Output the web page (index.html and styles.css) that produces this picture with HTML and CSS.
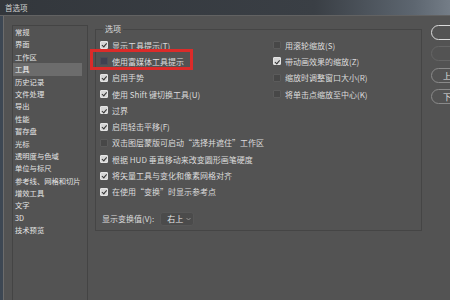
FILE: index.html
```html
<!DOCTYPE html>
<html>
<head>
    <title>首选项</title>
    <link rel="stylesheet" href="styles.css">
</head>
<body>
    <div class="window">
        <div class="titlebar">首选项</div>
        <div class="frame">
            <ul class="nav">
                <li>常规</li>
                <li>界面</li>
                <li>工作区</li>
                <li class="active">工具</li>
                <li>历史记录</li>
                <li>文件处理</li>
                <li>导出</li>
                <li>性能</li>
                <li>暂存盘</li>
                <li>光标</li>
                <li>透明度与色域</li>
                <li>单位与标尺</li>
                <li>参考线、网格和切片</li>
                <li>增效工具</li>
                <li>文字</li>
                <li>3D</li>
                <li>技术预览</li>
            </ul>

            <fieldset class="options">
                <legend>选项</legend>
                <div class="columns">
                    <div class="col">
                        <div class="check on"><span class="box"></span>显示工具提示(T)</div>
                        <div class="check focus"><span class="box"></span>使用富媒体工具提示<span class="mark"></span></div>
                        <div class="check on"><span class="box"></span>启用手势</div>
                        <div class="check on"><span class="box"></span>使用 Shift 键切换工具(U)</div>
                        <div class="check on"><span class="box"></span>过界</div>
                        <div class="check on"><span class="box"></span>启用轻击平移(F)</div>
                        <div class="check"><span class="box"></span>双击图层蒙版可启动“选择并遮住”工作区</div>
                        <div class="check on"><span class="box"></span>根据 HUD 垂直移动来改变圆形画笔硬度</div>
                        <div class="check on"><span class="box"></span>将矢量工具与变化和像素网格对齐</div>
                        <div class="check on"><span class="box"></span>在使用“变换”时显示参考点</div>
                    </div>
                    <div class="col">
                        <div class="check"><span class="box"></span>用滚轮缩放(S)</div>
                        <div class="check on"><span class="box"></span>带动画效果的缩放(Z)</div>
                        <div class="check"><span class="box"></span>缩放时调整窗口大小(R)</div>
                        <div class="check"><span class="box"></span>将单击点缩放至中心(K)</div>
                    </div>
                </div>
                <div class="transform">
                    <span>显示变换值(V):</span>
                    <div class="select">
                        右上
                        <svg width="5" height="4" viewBox="0 0 5 4"><polyline points="0.5,1 2.5,3 4.5,1" fill="none" stroke="#9a9a9a" stroke-width="0.9"/></svg>
                    </div>
                </div>
            </fieldset>

            <div class="buttons">
                <button class="btn default"></button>
                <button class="btn disabled"></button>
                <button class="btn">上</button>
                <button class="btn">下</button>
            </div>
        </div>
    </div>
</body>
</html>
```

FILE: styles.css
```css
html, body {
    margin: 0;
    padding: 0;
}
body {
    width: 450px;
    height: 300px;
    overflow: hidden;
    background: #535353;
    font-family: "Noto Sans CJK SC", "Noto Sans", sans-serif;
    color: #dcdcdc;
}
.window {
    width: 450px;
    height: 300px;
    overflow: hidden;
}
.titlebar {
    height: 15px;
    line-height: 15px;
    padding-left: 5px;
    font-size: 7.5px;
    color: #d2d2d2;
    background: linear-gradient(to right, #33373c 0%, #3a3f45 70%, #5d6670 92%, #747d87 100%);
    border-bottom: 1px solid #626262;
}
.frame {
    display: flex;
    align-items: flex-start;
    height: 284px;
    padding-top: 9px;
    border-left: 3px solid #3d4753;
    box-shadow: inset 1px 0 0 #6c6c6c;
}

/* left category list */
.nav {
    flex: none;
    width: 76px;
    height: 290px;
    box-sizing: border-box;
    margin: 0 0 0 9px;
    padding: 0;
    list-style: none;
    border: 1px solid #444;
    font-size: 7.3px;
    color: #e4e4e4;
}
.nav li {
    height: 12.4px;
    line-height: 12.4px;
    padding-left: 2px;
    margin-right: 5px;
    white-space: nowrap;
}
.nav li.active {
    background: #6c6c6c;
    color: #f2f2f2;
}

/* options group */
.options {
    flex: none;
    width: 327px;
    height: 207px;
    box-sizing: border-box;
    min-width: 0;
    margin: -1px 0 0 7px;
    padding: 3px 0 0 4px;
    border: 1px solid #454545;
    font-size: 8px;
}
.options legend {
    margin-left: 3px;
    padding: 0 2px;
    height: 10px;
    line-height: 10px;
    font-size: 8px;
    color: #dedede;
}
.columns {
    display: grid;
    grid-template-columns: 173px 1fr;
}
.check {
    position: relative;
    display: flex;
    align-items: center;
    height: 16.3px;
    white-space: nowrap;
}
.box {
    position: relative;
    flex: none;
    width: 8px;
    height: 8px;
    box-sizing: border-box;
    margin-right: 4px;
    background: #474747;
    border: 1px solid #5b5b5b;
    border-radius: 1px;
}
.check.on .box {
    background: #d6d6d6;
    border-color: #e4e4e4;
}
.check.on .box::after {
    content: "";
    position: absolute;
    left: 1.6px;
    top: 0.2px;
    width: 1.6px;
    height: 3.6px;
    border: solid #333;
    border-width: 0 1.3px 1.3px 0;
    transform: rotate(40deg);
}
.check.focus .box {
    background: #3f4150;
    border-color: #4a4c58;
}
.mark {
    position: absolute;
    left: -10px;
    top: -4px;
    width: 103px;
    height: 21px;
    box-sizing: border-box;
    border: 3px solid #dc2b29;
}

.transform {
    display: flex;
    align-items: center;
    height: 14px;
    margin-top: 12px;
    padding-left: 2px;
}
.select {
    display: flex;
    align-items: center;
    justify-content: space-between;
    width: 34px;
    height: 14px;
    box-sizing: border-box;
    margin-left: 6px;
    padding: 0 2px 0 6px;
    background: #4b4b4b;
    border: 1px solid #575757;
    border-radius: 3px;
    color: #e6e6e6;
}

/* right side buttons */
.buttons {
    flex: none;
    display: flex;
    flex-direction: column;
    gap: 6.3px;
    width: 40px;
    margin-left: 9px;
}
.btn {
    height: 15px;
    padding: 0 0 0 11px;
    text-align: left;
    font-family: inherit;
    font-size: 8px;
    color: #e0e0e0;
    background: transparent;
    border: 1px solid #8a8a8a;
    border-radius: 8px;
}
.btn.default {
    border: 1.5px solid #dadada;
}
.btn.disabled {
    border-color: #656565;
}
```
